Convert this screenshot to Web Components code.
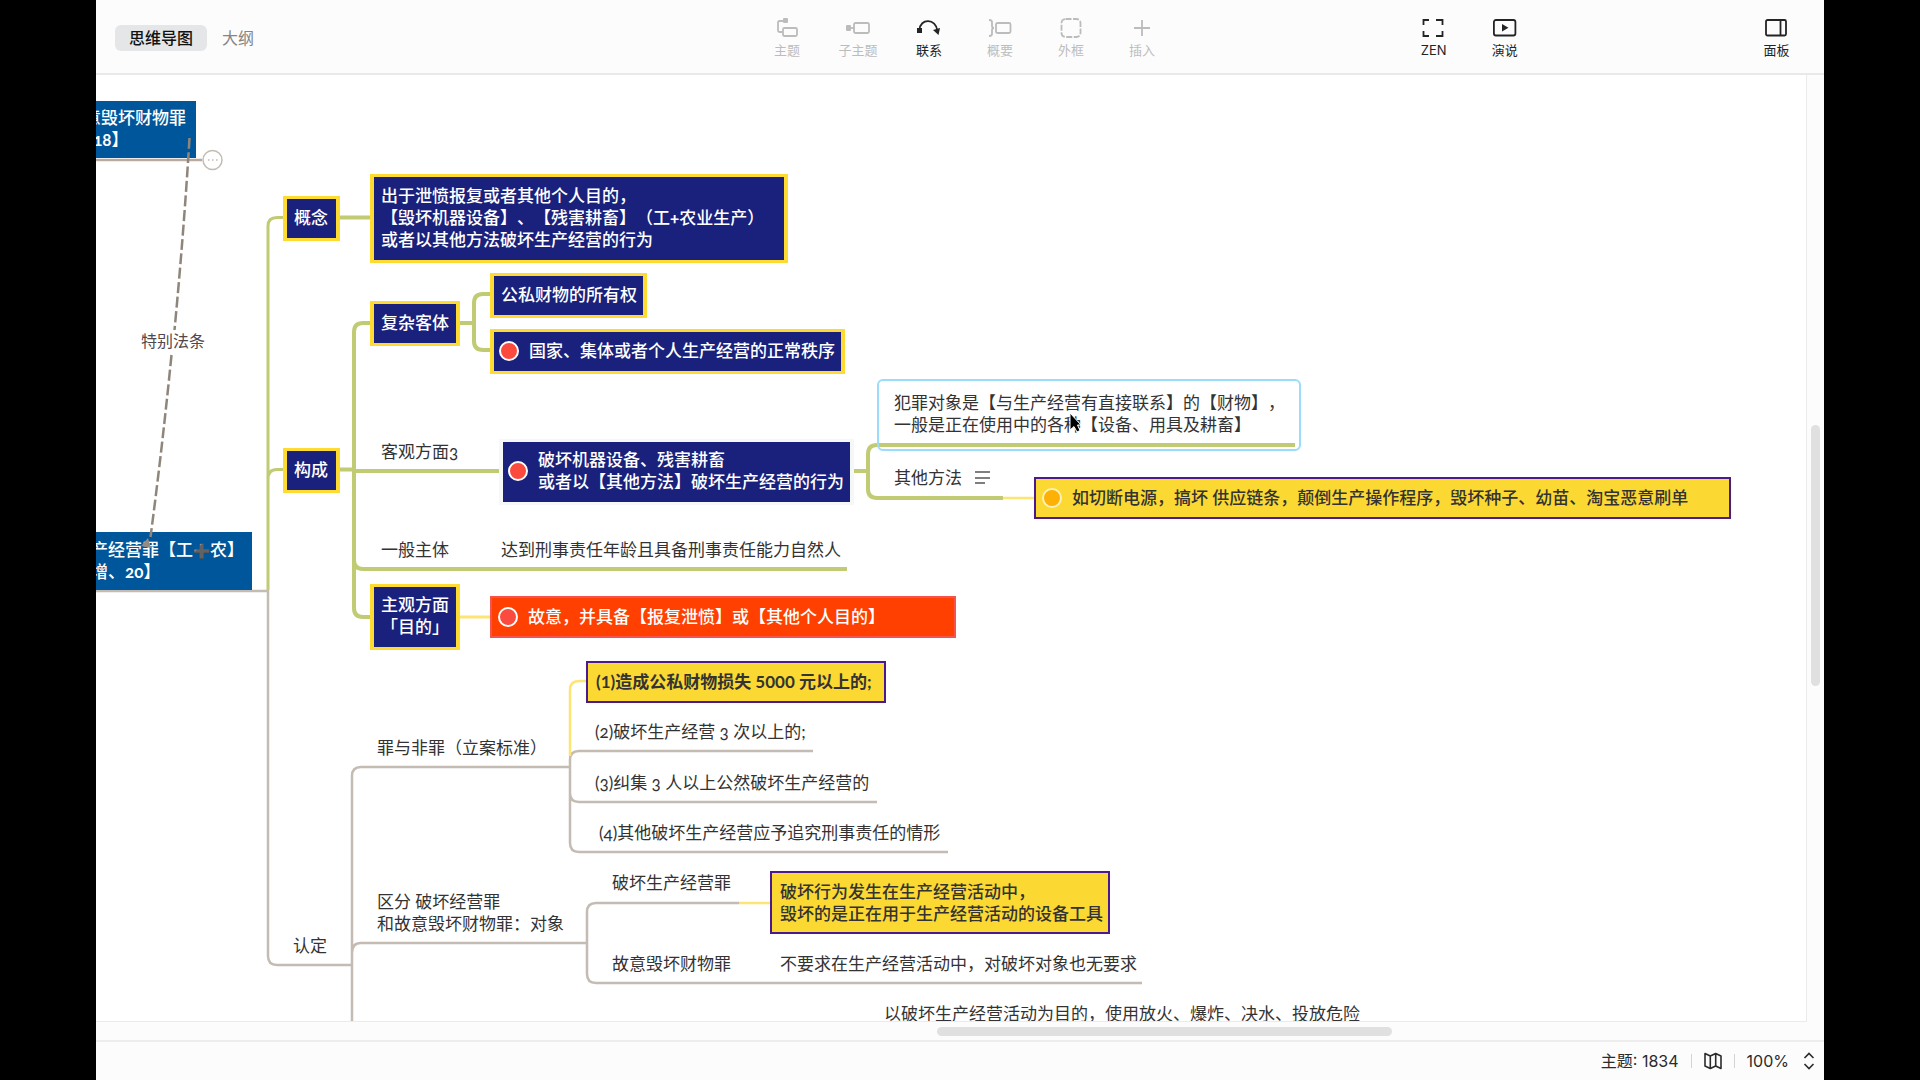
<!DOCTYPE html>
<html lang="zh-CN">
<head>
<meta charset="utf-8">
<title>思维导图</title>
<style>
html, body { margin: 0; height: 100%; background: #000; }
body { font-family: Inter, "Noto Sans CJK SC", sans-serif; text-spacing-trim: space-all; }
</style>
</head>
<body>
<mind-app></mind-app>

<template id="t-app">
<style>
:host { display: flex; flex-direction: column; height: 100vh; margin: 0 5%; background: #fcfcfc; overflow: hidden; }
mind-workspace { flex: 1; min-height: 0; }
</style>
<mind-header></mind-header>
<mind-workspace></mind-workspace>
<mind-status></mind-status>
</template>

<template id="t-header">
<style>
:host { display: block; flex: none; border-bottom: 2px solid #e9e9e9; }
header { height: 73px; display: grid; grid-template-columns: 656fr 426px 221fr 142px 201fr 71px 12px; }
nav { display: flex; align-items: center; gap: 15px; padding: 2px 0 0 19px; }
nav button { border: 0; background: none; font: 16px/26px Inter, "Noto Sans CJK SC", sans-serif; color: #858585; padding: 0; height: 26px; border-radius: 6px; }
nav button[aria-selected="true"] { background: #e5e6e8; color: #111; font-weight: 500; padding: 0 14px; }
.group { display: flex; }
.g2 { grid-column: 2; } .g4 { grid-column: 4; } .g6 { grid-column: 6; }
</style>
<header>
  <nav role="tablist">
    <button role="tab" aria-selected="true">思维导图</button>
    <button role="tab" aria-selected="false">大纲</button>
  </nav>
  <div class="group g2">
    <tool-button off label="主题"><svg width="24" height="22" viewBox="0 0 24 22"><path d="M8 4H4.500Q3 4 3 5.500V13.500Q3 15 4.500 15H7M9 11h11.500q1.500 0 1.500 1.500v5q0 1.500-1.500 1.500H9.500Q8 19 8 17.500v-5Q8 11 9.500 11"/><rect class="f" x="8" y="1" width="5" height="5" rx="1"/></svg></tool-button>
    <tool-button off label="子主题"><svg width="24" height="22" viewBox="0 0 24 22"><path d="M4 11h5"/><rect x="8" y="6" width="15" height="10" rx="1.500"/><rect class="f" x="0" y="8" width="5" height="6" rx="1"/></svg></tool-button>
    <tool-button label="联系"><svg width="24" height="22" viewBox="0 0 24 22"><path d="M2.500 13C3 1 19 1 20.500 14"/><rect class="f" x="0" y="11" width="5" height="5"/><path class="f" d="M16 13l7-2-1.500 7z"/></svg></tool-button>
    <tool-button off label="概要"><svg width="24" height="22" viewBox="0 0 24 22"><path d="M1 3q3 0 3 2v4q0 2 2 2q-2 0-2 2v4q0 2-3 2"/><rect x="8" y="6" width="14.500" height="10" rx="1.500"/></svg></tool-button>
    <tool-button off label="外框"><svg width="24" height="22" viewBox="0 0 24 22"><rect x="2.500" y="2" width="19" height="18" rx="4" stroke-dasharray="6 1.500"/></svg></tool-button>
    <tool-button off label="插入"><svg width="24" height="22" viewBox="0 0 24 22"><path d="M12 3v16M4 11h16"/></svg></tool-button>
  </div>
  <div class="group g4">
    <tool-button label="ZEN"><svg width="24" height="22" viewBox="0 0 24 22"><path d="M1.500 8V3H7M14 3h6.500v5M20.500 14v5H14M7 19H1.500v-5"/></svg></tool-button>
    <tool-button label="演说"><svg width="24" height="22" viewBox="0 0 24 22"><rect x="0.900" y="3" width="21.500" height="15.500" rx="2"/><path class="f" d="M9 7l6.500 3.800L9 14.600z"/></svg></tool-button>
  </div>
  <div class="group g6">
    <tool-button label="面板"><svg width="24" height="22" viewBox="0 0 24 22"><rect x="1" y="3" width="20" height="15.500" rx="1.500"/><path d="M15.500 3v15.500"/></svg></tool-button>
  </div>
</header>
</template>

<template id="t-tool">
<style>
:host { display: block; width: 71px; flex: none; --c: #242424; }
:host([off]) { --c: #bcbcbc; }
button { border: 0; background: none; padding: 17px 0 0; width: 100%; display: flex; flex-direction: column; align-items: center; gap: 2px; color: var(--c); font: 13px/18px Inter, "Noto Sans CJK SC", sans-serif; }
::slotted(svg) { display: block; fill: none; stroke: currentColor; stroke-width: 1.800; }
</style>
<button><slot></slot><span></span></button>
</template>

<template id="t-workspace">
<style>
:host { display: grid; grid-template: minmax(0, 1fr) 18px / minmax(0, 1fr) 17px; }
mind-map { border-right: 1px solid #ebebeb; border-bottom: 1px solid #ebebeb; }
.v { display: grid; grid-template-rows: 350fr 261fr 336fr; justify-items: center; }
.h { display: grid; grid-template-columns: 841fr 454fr 415fr; align-items: center; }
.v i { grid-row: 2; width: 9px; background: #e0e0e0; border-radius: 5px; }
.h i { grid-column: 2; height: 9px; background: #e0e0e0; border-radius: 5px; }
</style>
<mind-map></mind-map>
<div class="v"><i></i></div>
<div class="h"><i></i></div>
</template>

<template id="t-status">
<style>
:host { display: block; flex: none; border-top: 2px solid #ededed; }
footer { height: 38px; display: flex; justify-content: flex-end; align-items: center; gap: 12px; padding-right: 9px; font: 15px/20px Inter, "Noto Sans CJK SC", sans-serif; color: #2b2b2b; }
footer > span, button > span { font-size: 16px; }
hr { width: 1px; height: 14px; border: 0; margin: 0; background: #d4d4d4; }
button { border: 0; padding: 0; background: none; color: inherit; font: inherit; display: flex; align-items: center; gap: 14px; }
svg { display: block; fill: none; stroke: #2b2b2b; stroke-width: 1.600; }
</style>
<footer>
  <span>主题: 1834</span><hr>
  <button aria-label="地图"><svg width="18" height="18" viewBox="0 0 18 18"><path d="M1 1.500L6.300 4 11.700 1.500 17 4V16.500L11.700 14 6.300 16.500 1 14ZM6.300 4V16.500M11.700 1.500V14" stroke-linejoin="round"/></svg></button><hr>
  <button><span>100%</span><svg width="12" height="18" viewBox="0 0 12 18"><path d="M1.500 6L6 1.500 10.500 6M1.500 12L6 16.500 10.500 12"/></svg></button>
</footer>
</template>

<template id="t-node">
<style>
:host { position: absolute; box-sizing: border-box; display: flex; align-items: center; white-space: nowrap; color: #333; font: 400 17px/22px Lato, "Noto Sans CJK SC", sans-serif; font-variant-numeric: oldstyle-nums; }
:host([kind="navy"]) { background: #1a217c; border: 3px solid #fddb33; border-width: 3px 4px; padding: 0 7px 2px; color: #fff; font-weight: 500; }
:host([kind="navy"][pale]) { border-color: #f5f7f8; }
:host([kind="blue"]) { background: #00569a; color: #fff; font-weight: 500; padding-bottom: 1px; }
:host([kind="red"]) { background: #ff4000; border: 2px solid #f5534b; padding: 0 8px; color: #fff; font-weight: 500; }
:host([kind="yellow"]) { background: #fcd932; border: 2px solid #4b1a8c; padding: 0 8px; font-weight: 500; }
:host([kind="label"]) { font-size: 16px; color: #54474a; }
:host([strong]) { font-weight: 700; font-variant-numeric: lining-nums; }
i { display: none; flex: none; box-sizing: border-box; width: 20px; height: 20px; border-radius: 50%; border: 2px solid #fff; background: #fb4a3e; margin: 0 10px 0 -2px; }
:host([marker]) i { display: block; }
:host([marker="orange"]) i { background: #fdb005; border-color: #fdf0b8; }
</style>
<i></i><span><slot></slot></span>
</template>

<template id="t-map">
<style>
:host { display: block; position: relative; overflow: hidden; background: #fff; }
.world { position: absolute; left: -96px; top: -75px; width: 1920px; height: 1080px; }
.world > svg { position: absolute; left: 0; top: 0; fill: none; }
.g { stroke: #c1cb74; } .s { stroke: #c4bcb3; } .y { stroke: #fde574; }
b { font-weight: 700; }
.plus { display: inline-block; width: 17px; text-align: center; color: #3d4247; font-family: "DejaVu Sans"; font-size: 14px; line-height: 16px; }
.pick { position: absolute; left: 877px; top: 379px; width: 424px; height: 72px; box-sizing: border-box; border: 2px solid #9bdcfb; border-radius: 6px; }
</style>
<div class="world">
<svg width="1920" height="1080" viewBox="0 0 1920 1080" aria-hidden="true">
  <g class="s" stroke-width="2.500">
    <path d="M96 160H202" stroke="#b9aaa0"/>
    <path d="M96 591H268V956Q268 965 277 965H352M352 1030V776Q352 767 361 767H570M352 953Q352 943 361 943H588M570 767V760Q570 751 579 751H813M570 767V793Q570 802 579 802H877M570 790V843Q570 852 579 852H948M739 903H596Q587 903 587 912V974Q587 983 596 983H1142"/>
    <circle cx="212.500" cy="160" r="9.500" stroke-width="1.500" fill="#fff"/>
    <path d="M208 160h1.500M212 160h1.500M216 160h1.500" stroke-width="1.500"/>
  </g>
  <g class="y" stroke-width="2.500">
    <path d="M460 617H490" stroke-width="3"/><path d="M1003 498H1034M739 903H771M586 681H579Q570 681 570 690V756"/>
  </g>
  <g class="g" stroke-width="3">
    <path d="M283 217.500H277Q268 217.500 268 226V590M283 469.500H277Q268 469.500 268 479"/>
    <g stroke-width="4">
      <path d="M340 217.500H370M340 469.500H354M354 471H499M370 323H363Q354 323 354 332V608Q354 617 363 617H370M354 560Q354 569 363 569H847M460 323H474M490 294H483Q474 294 474 303V341Q474 350 483 350H490M854 471H868M1295 445H877Q868 445 868 454V489Q868 498 877 498H1003"/>
    </g>
  </g>
</svg>
<mind-node kind="blue" x="67" y="101" w="129" h="57">故意毁坏财物罪<br>【1<b>18</b>】</mind-node>
<mind-node kind="blue" x="91" y="532" w="161" h="58">产经营罪【工<span class="plus">➕</span>农】<br>增、<b>20</b>】</mind-node>
<mind-node kind="label" x="141" y="330">特别法条</mind-node>
<mind-node kind="navy" x="283" y="196" w="57" h="45">概念</mind-node>
<mind-node kind="navy" x="370" y="174" w="418" h="89">出于泄愤报复或者其他个人目的，<br>【毁坏机器设备】、【残害耕畜】（工<b>+</b>农业生产）<br>或者以其他方法破坏生产经营的行为</mind-node>
<mind-node kind="navy" x="490" y="273" w="157" h="45">公私财物的所有权</mind-node>
<mind-node kind="navy" x="370" y="301" w="90" h="45">复杂客体</mind-node>
<mind-node kind="navy" marker="red" x="490" y="329" w="355" h="45">国家、集体或者个人生产经营的正常秩序</mind-node>
<mind-node kind="navy" x="283" y="448" w="57" h="45">构成</mind-node>
<mind-node x="381" y="441">客观方面3</mind-node>
<mind-node kind="navy" pale marker="red" x="499" y="439" w="355" h="66">破坏机器设备、残害耕畜<br>或者以【其他方法】破坏生产经营的行为</mind-node>
<mind-node x="381" y="539">一般主体</mind-node>
<mind-node x="501" y="539">达到刑事责任年龄且具备刑事责任能力自然人</mind-node>
<mind-node kind="navy" x="370" y="584" w="90" h="66">主观方面<br>「目的」</mind-node>
<mind-node kind="red" marker="red" x="490" y="596" w="466" h="42">故意，并具备【报复泄愤】或【其他个人目的】</mind-node>
<div class="pick"></div>
<mind-node x="894" y="392">犯罪对象是【与生产经营有直接联系】的【财物】，<br>一般是正在使用中的各种【设备、用具及耕畜】</mind-node>
<mind-node x="894" y="467">其他方法</mind-node>
<mind-node kind="yellow" marker="orange" x="1034" y="477" w="697" h="42">如切断电源，搞坏 供应链条，颠倒生产操作程序，毁坏种子、幼苗、淘宝恶意刷单</mind-node>
<mind-node kind="yellow" strong x="586" y="661" w="300" h="42">(1)造成公私财物损失 5000 元以上的;</mind-node>
<mind-node x="595" y="721">(2)破坏生产经营 3 次以上的;</mind-node>
<mind-node x="595" y="772">(3)纠集 3 人以上公然破坏生产经营的</mind-node>
<mind-node x="599" y="822">(4)其他破坏生产经营应予追究刑事责任的情形</mind-node>
<mind-node x="377" y="737">罪与非罪（立案标准）</mind-node>
<mind-node x="377" y="891">区分 破坏经营罪<br>和故意毁坏财物罪：对象</mind-node>
<mind-node x="293" y="935">认定</mind-node>
<mind-node x="612" y="872">破坏生产经营罪</mind-node>
<mind-node x="612" y="953">故意毁坏财物罪</mind-node>
<mind-node kind="yellow" x="770" y="871" w="340" h="63">破坏行为发生在生产经营活动中，<br>毁坏的是正在用于生产经营活动的设备工具</mind-node>
<mind-node x="780" y="953">不要求在生产经营活动中，对破坏对象也无要求</mind-node>
<mind-node x="884" y="1003">以破坏生产经营活动为目的，使用放火、爆炸、决水、投放危险</mind-node>
<svg width="1920" height="1080" viewBox="0 0 1920 1080" aria-hidden="true">
  <path d="M189.500 138Q184 230 174.500 330M171.500 355Q162 450 150.500 537" stroke="#8f867b" stroke-width="2.500" stroke-dasharray="11 3.500"/>
  <path d="M148 538L141 546 151 548Z" fill="#938b84"/>
  <path d="M975 472H990M975 478H990M975 483H985" stroke="#555" stroke-width="1.500"/>
  <path d="M1070 413V430L1074 426.500 1077 432 1080 430.500 1077.500 425H1081Z" fill="#000" stroke="#fff" stroke-width="1"/>
</svg>
</div>
</template>

<script>
class TemplateElement extends HTMLElement {
  constructor() {
    super();
    const template = document.getElementById(this.constructor.template);
    this.attachShadow({ mode: 'open' }).append(template.content.cloneNode(true));
  }
}
class MindNode extends TemplateElement {
  static template = 't-node';
  connectedCallback() {
    const props = { x: 'left', y: 'top', w: 'width', h: 'height' };
    for (const [attr, prop] of Object.entries(props)) {
      if (this.hasAttribute(attr)) this.style[prop] = this.getAttribute(attr) + 'px';
    }
  }
}
class ToolButton extends TemplateElement {
  static template = 't-tool';
  connectedCallback() {
    this.shadowRoot.querySelector('span').textContent = this.getAttribute('label');
    this.querySelectorAll('.f').forEach(shape => {
      shape.setAttribute('fill', 'currentColor');
      shape.setAttribute('stroke', 'none');
    });
  }
}
class MindMap extends TemplateElement { static template = 't-map'; }
class MindWorkspace extends TemplateElement { static template = 't-workspace'; }
class MindHeader extends TemplateElement { static template = 't-header'; }
class MindStatus extends TemplateElement { static template = 't-status'; }
class MindApp extends TemplateElement { static template = 't-app'; }
customElements.define('mind-node', MindNode);
customElements.define('tool-button', ToolButton);
customElements.define('mind-map', MindMap);
customElements.define('mind-workspace', MindWorkspace);
customElements.define('mind-header', MindHeader);
customElements.define('mind-status', MindStatus);
customElements.define('mind-app', MindApp);
</script>
</body>
</html>
